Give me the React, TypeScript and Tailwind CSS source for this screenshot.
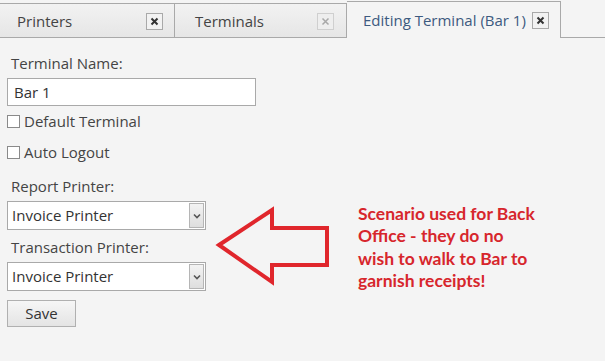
import React from "react";

function CloseBox({ faded }: { faded?: boolean }) {
  return (
    <div
      className={`flex h-[17px] w-[17px] items-center justify-center border ${
        faded ? "border-[#cfcfcf] bg-[#eeeeee]" : "border-[#a9a9a9] bg-[#f2f2f2]"
      }`}
    >
      <svg width="9" height="9" viewBox="0 0 9 9">
        <path
          d="M1.5 1.5 L7.5 7.5 M7.5 1.5 L1.5 7.5"
          stroke={faded ? "#a8a8a8" : "#333"}
          strokeWidth={faded ? 1.5 : 2}
        />
      </svg>
    </div>
  );
}

function Select() {
  return (
    <div className="flex h-[29px] w-[199px] items-center border border-[#a9a9a9] bg-white">
      <div className="flex-1 pl-[4px] text-[15px] text-[#333]">Invoice Printer</div>
      <div className="mr-[1px] flex h-[25px] w-[15px] items-center justify-center border border-[#b5b5b5] bg-gradient-to-b from-[#f3f3f3] to-[#dedede]">
        <svg width="8" height="6" viewBox="0 0 8 6">
          <path d="M1 1.5 L4 4.5 L7 1.5" stroke="#555" strokeWidth="1.6" fill="none" />
        </svg>
      </div>
    </div>
  );
}

export default function App() {
  return (
    <div
      className="relative h-[361px] w-[605px] overflow-hidden bg-[#f4f4f4] text-[#444]"
      style={{ fontFamily: '"Open Sans", "Noto Sans", sans-serif' }}
    >
      {/* tab bar */}
      <div className="flex h-[38px] items-end border-b border-[#a9a9a9]">
        <div className="mb-[-1px] flex h-[35px] w-[175px] items-center justify-between border-t border-r border-b border-[#a9a9a9] bg-gradient-to-b from-[#f2f2f2] to-[#e6e6e6] pr-[11px] pl-[17px] pt-[1px] text-[15px]">
          <span>Printers</span>
          <CloseBox />
        </div>
        <div className="mb-[-1px] flex h-[35px] w-[172px] items-center justify-between border-t border-r border-b border-[#a9a9a9] bg-gradient-to-b from-[#f2f2f2] to-[#e6e6e6] pr-[12px] pl-[20px] pt-[1px] text-[15px]">
          <span>Terminals</span>
          <CloseBox faded />
        </div>
        <div className="mb-[-1px] flex h-[37px] w-[214px] items-center gap-[6px] border-t border-r border-[#a9a9a9] bg-[#f4f4f4] pl-[16px] text-[15px] text-[#3d5a80]">
          <span>Editing Terminal (Bar 1)</span>
          <CloseBox />
        </div>
      </div>

      {/* form */}
      <div className="flex flex-col pl-[7px] pt-[14px] text-[15px]">
        <div className="pl-[4px] leading-[22px]">Terminal Name:</div>
        <div className="mt-[4px] flex h-[28px] w-[249px] items-center border border-[#a9a9a9] bg-white pl-[6px] text-[#333]">
          Bar 1
        </div>
        <div className="mt-[4px] flex h-[22px] items-center gap-[4px]">
          <div className="h-[13px] w-[13px] border border-[#8a8a8a] bg-white" />
          <span>Default Terminal</span>
        </div>
        <div className="mt-[9px] flex h-[22px] items-center gap-[4px]">
          <div className="h-[13px] w-[13px] border border-[#8a8a8a] bg-white" />
          <span>Auto Logout</span>
        </div>
        <div className="mt-[12px] pl-[4px] leading-[22px]">Report Printer:</div>
        <div className="mt-[4px]">
          <Select />
        </div>
        <div className="mt-[6px] pl-[4px] leading-[22px]">Transaction Printer:</div>
        <div className="mt-[4px]">
          <Select />
        </div>
        <button className="mt-[9px] flex h-[27px] w-[69px] items-center justify-center border border-[#b0b0b0] bg-gradient-to-b from-[#f6f6f6] to-[#e4e4e4] text-[15px] text-[#333]">
          Save
        </button>
      </div>

      {/* annotation arrow */}
      <svg className="absolute left-0 top-0" width="605" height="361">
        <polygon
          points="219,245 272,210 272,228 327,228 327,265 272,265 272,282"
          fill="none"
          stroke="#e0262c"
          strokeWidth="4"
          strokeLinejoin="miter"
        />
      </svg>
      <div
        className="absolute left-[358px] top-[203px] text-[17.5px] font-bold leading-[22.3px] text-[#d7262c]"
        style={{ fontFamily: 'Lato, "Open Sans", sans-serif' }}
      >
        Scenario used for Back
        <br />
        Office - they do no
        <br />
        wish to walk to Bar to
        <br />
        garnish receipts!
      </div>
    </div>
  );
}
